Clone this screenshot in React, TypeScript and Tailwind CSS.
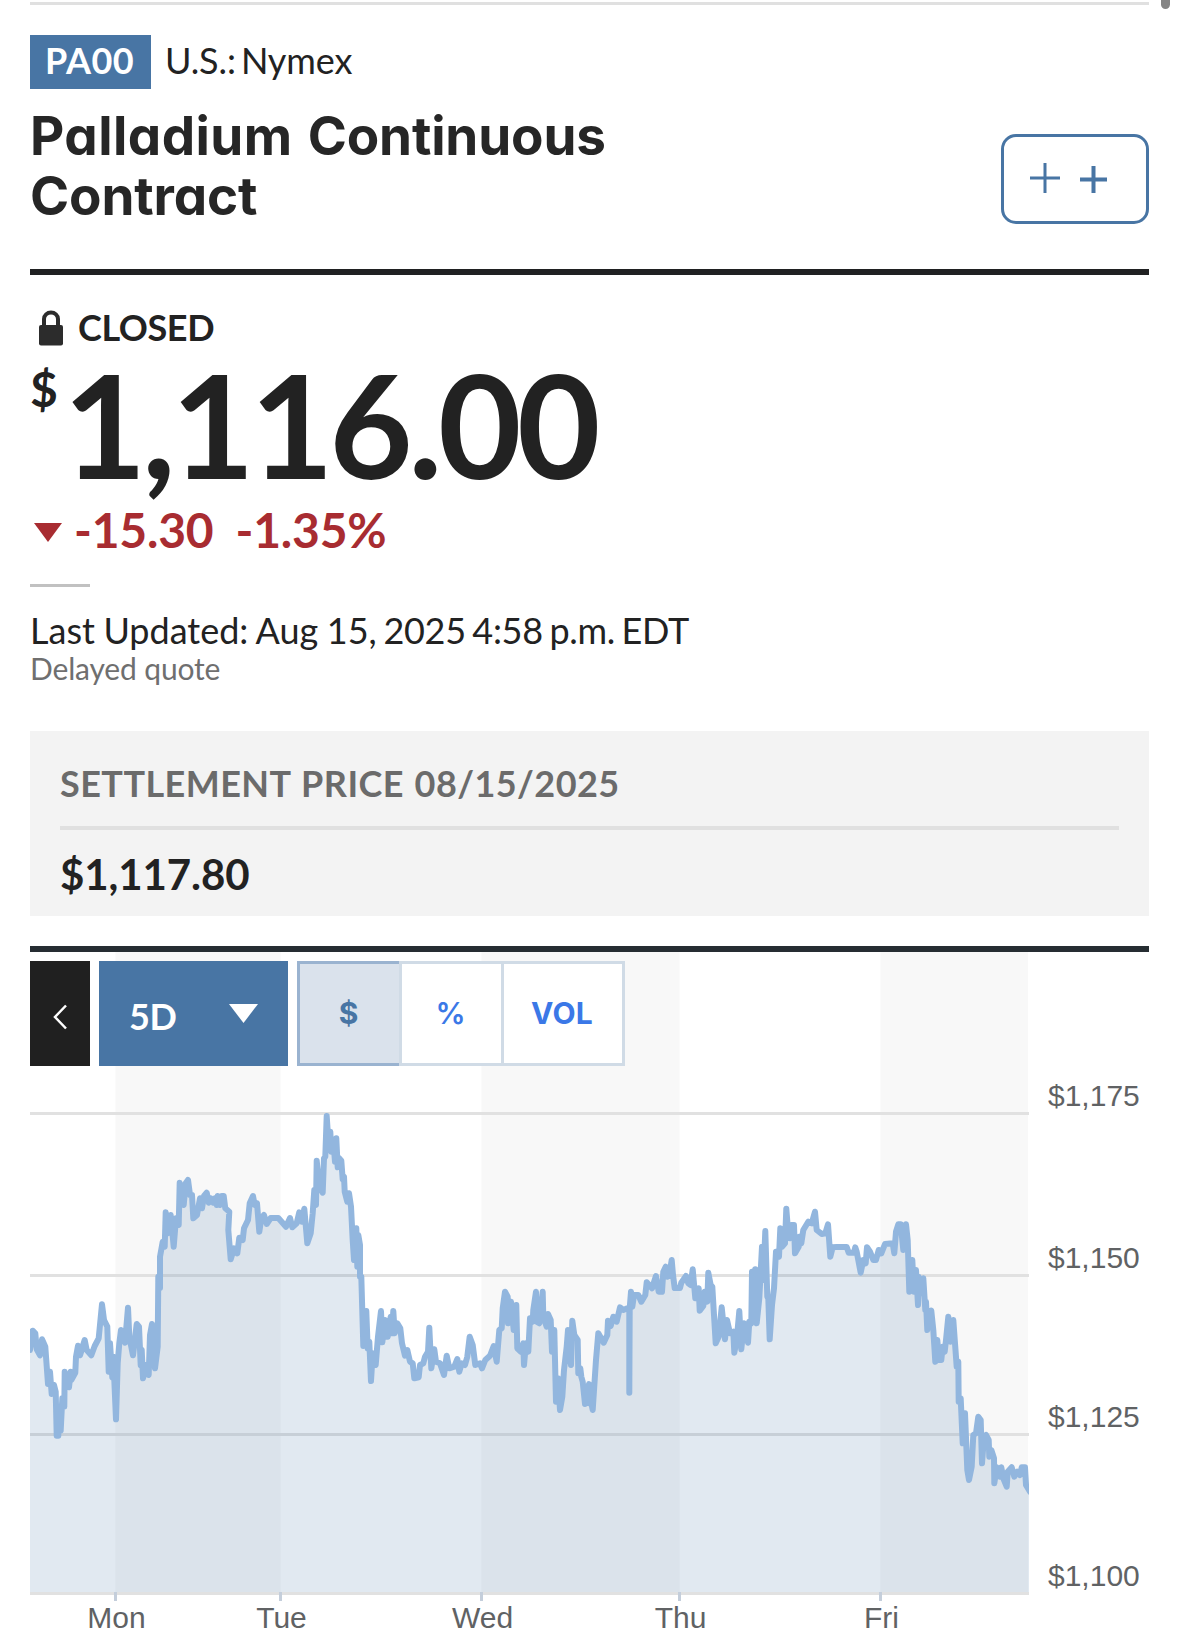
import type { ReactNode } from "react";

// Price line, stored as short runs in 1/3px units, each from its own origin
const RUNS = [
  {
    x: 20,
    y: 1090,
    points:
      "30,780 38,722 46,730 50,778 60,796 66,748 76,770 84,882 90,845 95,912 102,885 107,905 110,1037 115,1037 118,960 122,1022 127,925 133,950 134,845 147,892 152,845 154,870 166,848 168,800 174,767 180,796 194,750 200,780 214,796 224,768 236,745 246,643 252,690 262,710 266,845 270,760 277,862 280,800 288,988 293,820 298,760 303,720 315,758 324,653 328,740 339,796 350,702 357,710 362,825 365,780 369,865 378,825 386,855 390,735 396,702 405,835 413,770 415,560 420,595 420,500 428,455 434,470 437,367 444,430 452,375 461,470 468,385 476,405 479,278 491,345 497,280 504,270 510,315 516,315 520,385 531,375 540,325 546,355 552,318 560,308 566,338 572,325 580,338 585,325 590,345 593,318 600,345 605,318 611,318 616,355 628,365 625,420 632,508 642,475 652,490 658,443 668,450 672,415 684,390 689,340 699,318 704,345 711,340 718,425 724,385 732,375 740,402 752,384 775,384 798,410 810,384 817,412 830,400 838,367 846,395 853,356",
  },
  {
    x: 270,
    y: 1090,
    points:
      "103,356 112,460 122,430 128,370 133,300 138,345 140,212 148,290 158,308 162,205 166,200 170,78 176,170 181,125 184,185 190,150 195,215 199,145 203,232 208,205 214,212 218,268 222,260 224,305 232,335 237,310 243,350 248,450 252,510 259,415 262,530 265,435 270,465 270,560 274,560 280,768 289,663 293,775 298,755 303,873 308,790 317,825 324,740 333,663 337,757 345,690 353,740 362,680 366,730 370,663 374,730 382,700 391,715 396,760 405,797 412,780 420,815 428,820 433,865 446,862 450,825 460,820 465,800 474,785 478,713 484,835 493,778 498,815 510,820 522,855 530,797 538,835 553,830 562,807 568,845 575,820 585,825 592,800 599,740 608,765 616,825 630,820 636,835 646,810 660,797 671,768 680,815 688,720 695,715 698,655 705,605 713,620 714,700 723,635 731,720 739,645 742,775 752,785 760,760 762,825 768,760 775,785 780,685 788,695 790,660 798,605 800,695 808,700 818,605 820,680 830,710 834,672 842,690 846,785 853,720",
  },
  {
    x: 470,
    y: 1200,
    points:
      "253,390 258,605 264,535 270,630 277,590 282,510 290,440 294,390 303,495 307,362 313,405 323,420 325,520 331,505 334,530 338,545 345,612 350,575 357,552 357,610 362,600 368,630 378,480 385,400 401,428 412,405 414,362 422,378 430,350 440,365 450,322 460,330 472,325 478,330 478,578 479,325 483,275 487,320 492,285 505,285 514,305 526,285 530,247 546,265 558,228 566,275 576,275 580,215 587,200 592,230 598,225 605,180 609,225 614,264 630,264 634,248 648,228 655,250 662,255 668,208 676,295 686,265 689,332 700,318 704,275 712,305 715,218 722,255 727,260 737,430 746,410 755,322 765,418 771,360 780,400 790,395 793,458 800,420 808,333 814,448 822,370 834,428 838,365 844,370",
  },
  {
    x: 680,
    y: 1180,
    points:
      "216,275 220,400 226,268 230,430 238,355 246,200 250,300 256,153 262,350 265,355 269,478 276,375 282,325 288,215 297,230 301,145 306,200 315,190 319,86 324,150 330,175 334,135 342,135 345,220 356,200 358,170 364,190 370,150 385,125 395,130 405,95 410,150 425,162 436,160 444,133 451,230 458,202 470,201 500,201 506,218 522,218 526,202 530,215 542,278 550,240 557,250 561,202 570,215 580,240 588,240 596,210 604,220 615,192 638,190 643,220 648,155 655,133 662,133 670,210",
  },
  {
    x: 840,
    y: 1180,
    points:
      "198,133 203,180 208,335 213,280 217,240 222,335 228,270 234,375 236,290 244,340 250,295 256,390 258,365 262,450 268,400 274,392 280,450 286,545 292,480 297,540 304,540 308,500 314,515 318,480 325,410 332,485 340,420 345,490 350,560 355,545 356,665 362,655 368,790 375,700 382,870 387,900 395,860 400,765 408,760 415,710 422,720 426,850 432,770 438,765 446,780 448,830 454,810 462,835 463,910 470,862 480,890 484,862 490,895 500,920 503,875 515,862 523,890 532,875 540,885 545,862 555,862 558,915 570,935",
  },
];

const LINE = RUNS.flatMap((run) =>
  run.points.split(" ").map((p) => {
    const [x, y] = p.split(",").map(Number);
    return `${(run.x + x / 3).toFixed(1)},${(run.y + y / 3).toFixed(1)}`;
  })
).join(" ");

const BANDS = [
  { x: 115.5, width: 165 },
  { x: 481.5, width: 198 },
  { x: 880.5, width: 147.5 },
];

const PRICES = [
  { label: "$1,175", y: 1112 },
  { label: "$1,150", y: 1274 },
  { label: "$1,125", y: 1433 },
  { label: "$1,100", y: 1592 },
];

const DAYS = [
  { label: "Mon", x: 115.5 },
  { label: "Tue", x: 280.5 },
  { label: "Wed", x: 481.5 },
  { label: "Thu", x: 679.5 },
  { label: "Fri", x: 880.5 },
];

function Chart() {
  return (
    <svg viewBox="0 952 1179 695" className="block w-[1179px] h-[695px] [grid-area:1/1]">
      <defs>
        <clipPath id="plot">
          <rect x="30" y="952" width="999" height="643" />
        </clipPath>
      </defs>
      {BANDS.map((b) => (
        <rect key={b.x} x={b.x} y="952" width={b.width} height="640" fill="#f8f8f8" />
      ))}
      {PRICES.map((p) => (
        <rect key={p.label} x="30" y={p.y} width="999" height="3" fill="#e1e1e1" />
      ))}
      <g clipPath="url(#plot)">
        <polygon points={`30,1592 ${LINE} 1030,1592`} fill="#4676a6" fillOpacity="0.16" />
        <polyline points={LINE} fill="none" stroke="#92b6de" strokeWidth="6" strokeLinecap="round" strokeLinejoin="round" />
      </g>
      {DAYS.map((d) => (
        <g key={d.label}>
          <rect x={d.x - 1.5} y="1592" width="3" height="9" fill="#c4cedb" />
          <text x={d.x + 1} y="1628" textAnchor="middle" fontSize="30" fill="#606264" className="font-['Liberation_Sans',sans-serif]">
            {d.label}
          </text>
        </g>
      ))}
      {PRICES.map((p) => (
        <text key={p.label} x="1048" y={p.y - 6} fontSize="30" fill="#606264" className="font-['Liberation_Sans',sans-serif]">
          {p.label}
        </text>
      ))}
    </svg>
  );
}

function Segment({ className, children }: { className: string; children: ReactNode }) {
  return (
    <button className={`h-[105px] border-y-[3px] text-[30px] font-[Inter,sans-serif] ${className}`}>
      {children}
    </button>
  );
}

export default function App() {
  return (
    <div className="relative w-[1179px] h-[1647px] overflow-hidden bg-white text-[#222] font-[Lato,sans-serif]">
      {/* SCROLLBAR */}
      <div className="absolute right-[9px] top-0 w-[9px] h-[9px] rounded-b-full bg-[#858585]" />

      <div className="px-[30px] pt-[2px]">
        <div className="h-[3px] bg-[#e0e0e0]" />

        {/* HEADER */}
        <div className="mt-[30px] flex items-start h-[54px] text-[36px] leading-[51px]">
          <span className="w-[121px] h-[54px] pl-[15px] bg-[#4875a4] text-white font-bold tracking-[0.5px]">PA00</span>
          <span className="ml-[14px] tracking-[-0.1px] [word-spacing:-4px]">U.S.: Nymex</span>
        </div>
        <div className="mt-[15px] flex justify-between h-[165px]">
          {/* cv11 = single-storey a */}
          <h1 className="w-[640px] pt-[2px] text-[53px] leading-[60px] font-bold text-[#262626] font-[Inter,sans-serif] [font-feature-settings:'cv11'] tracking-[-0.15px]">
            <span className="tracking-[0.45px]">Palladium </span>
            <span className="ml-[2px]">Continuous</span>
            <br />
            Contract
          </h1>
          <button className="mt-[30px] w-[148px] h-[90px] pl-[26px] flex items-center gap-[20px] border-[3px] border-[#4875a4] rounded-[15px] text-[#4875a4]">
            <svg width="30" height="30" viewBox="0 0 30 30" stroke="currentColor" strokeWidth="3" className="-mt-[2px]">
              <path d="M0 15h30M15 0v30" />
            </svg>
            <svg width="27" height="27" viewBox="0 0 27 27" stroke="currentColor" strokeWidth="4">
              <path d="M0 13.500h27M13.500 0v27" />
            </svg>
          </button>
        </div>
        <div className="h-[6px] bg-[#202122]" />

        {/* QUOTE */}
        <div className="mt-[30px] h-[44px] flex">
          <svg width="24" height="36" viewBox="0 0 24 36" className="ml-[9px] mt-[5px]">
            <path d="M5 16V9a7 6.500 0 0 1 14 0v7" fill="none" stroke="#2c2c2c" strokeWidth="4" />
            <rect y="15" width="24" height="20.500" rx="2" fill="#2c2c2c" />
          </svg>
          <span className="ml-[15px] text-[36px] leading-[44px] font-bold tracking-[-0.4px]">CLOSED</span>
        </div>
        <div className="mt-[3px] h-[143px] flex">
          <span className="w-[33px] mt-[8px] text-[48px] leading-[58px] font-bold">$</span>
          <span className="text-[144px] leading-[144px] font-bold tracking-[-4.5px]">1,116.00</span>
        </div>
        <div className="mt-[4px] h-[58px] flex text-[48px] leading-[62px] font-bold tracking-[-0.2px] text-[#a82c31]">
          <svg width="28" height="19" viewBox="0 0 28 19" className="ml-[4px] mt-[24px]">
            <path d="M0 0h28L14 19z" fill="currentColor" />
          </svg>
          <span className="ml-[12px]">-15.30</span>
          <span className="ml-[22px]">-1.35%</span>
        </div>
        <div className="mt-[27px] w-[60px] h-[3px] bg-[#c1c1c1]" />
        <div className="mt-[21px] h-[43px] text-[36px] leading-[45px]">
          <span className="[word-spacing:-0.7px]">Last Updated: Aug 15,</span>
          <span className="tracking-[-0.3px] [word-spacing:-2.3px]"> 2025 4:58 p.m. EDT</span>
        </div>
        <div className="-mt-px h-[36px] text-[30px] leading-[37px] tracking-[-0.15px] text-[#6f6f6f]">Delayed quote</div>

        {/* SETTLEMENT */}
        <div className="mt-[45px] h-[185px] px-[30px] pt-[30px] bg-[#f3f3f3] font-bold">
          <div className="text-[36px] leading-[44px] tracking-[0.45px] [word-spacing:1.4px] text-[#6b6b6b]">
            SETTLEMENT PRICE 08/15/2025
          </div>
          <div className="mt-[21px] h-[4px] bg-[#e0e0e0]" />
          <div className="mt-[18px] text-[42px] leading-[52px] tracking-[-0.1px]">$1,117.80</div>
        </div>
        <div className="mt-[30px] h-[6px] bg-[#262d32]" />
      </div>

      {/* CHART */}
      <div className="grid">
        <Chart />
        <div className="[grid-area:1/1] relative pl-[30px] pt-[9px] flex items-start">
          <button className="w-[60px] h-[105px] flex items-center justify-center bg-[#202020] text-white">
            <svg width="14" height="26" viewBox="0 0 14 26" fill="none" stroke="currentColor" strokeWidth="2.500" className="mt-[6px]">
              <path d="M13 1.500L2 13l11 11.500" />
            </svg>
          </button>
          <button className="ml-[9px] w-[189px] h-[105px] pl-[30px] pr-[30px] flex items-center justify-between bg-[#4875a4] text-white">
            <span className="pt-[4px] text-[36px] leading-[44px] font-bold tracking-[-0.5px]">5D</span>
            <svg width="29" height="19" viewBox="0 0 29 19">
              <path d="M0 0h29L14.500 19z" fill="currentColor" />
            </svg>
          </button>
          <div className="ml-[9px] flex">
            <Segment className="w-[102px] pr-[2px] border-l-[3px] border-[#9ab3d0] bg-[#dae2ec] text-[#4875a4] font-bold">$</Segment>
            <Segment className="w-[102px] pr-[2px] border-l-[3px] border-[#d0dbe6] bg-white text-[#3b78e7] font-semibold">%</Segment>
            <Segment className="w-[124px] pr-[2px] border-x-[3px] border-[#d0dbe6] bg-white text-[#3b78e7] font-bold tracking-[0.3px]">VOL</Segment>
          </div>
        </div>
      </div>
    </div>
  );
}
